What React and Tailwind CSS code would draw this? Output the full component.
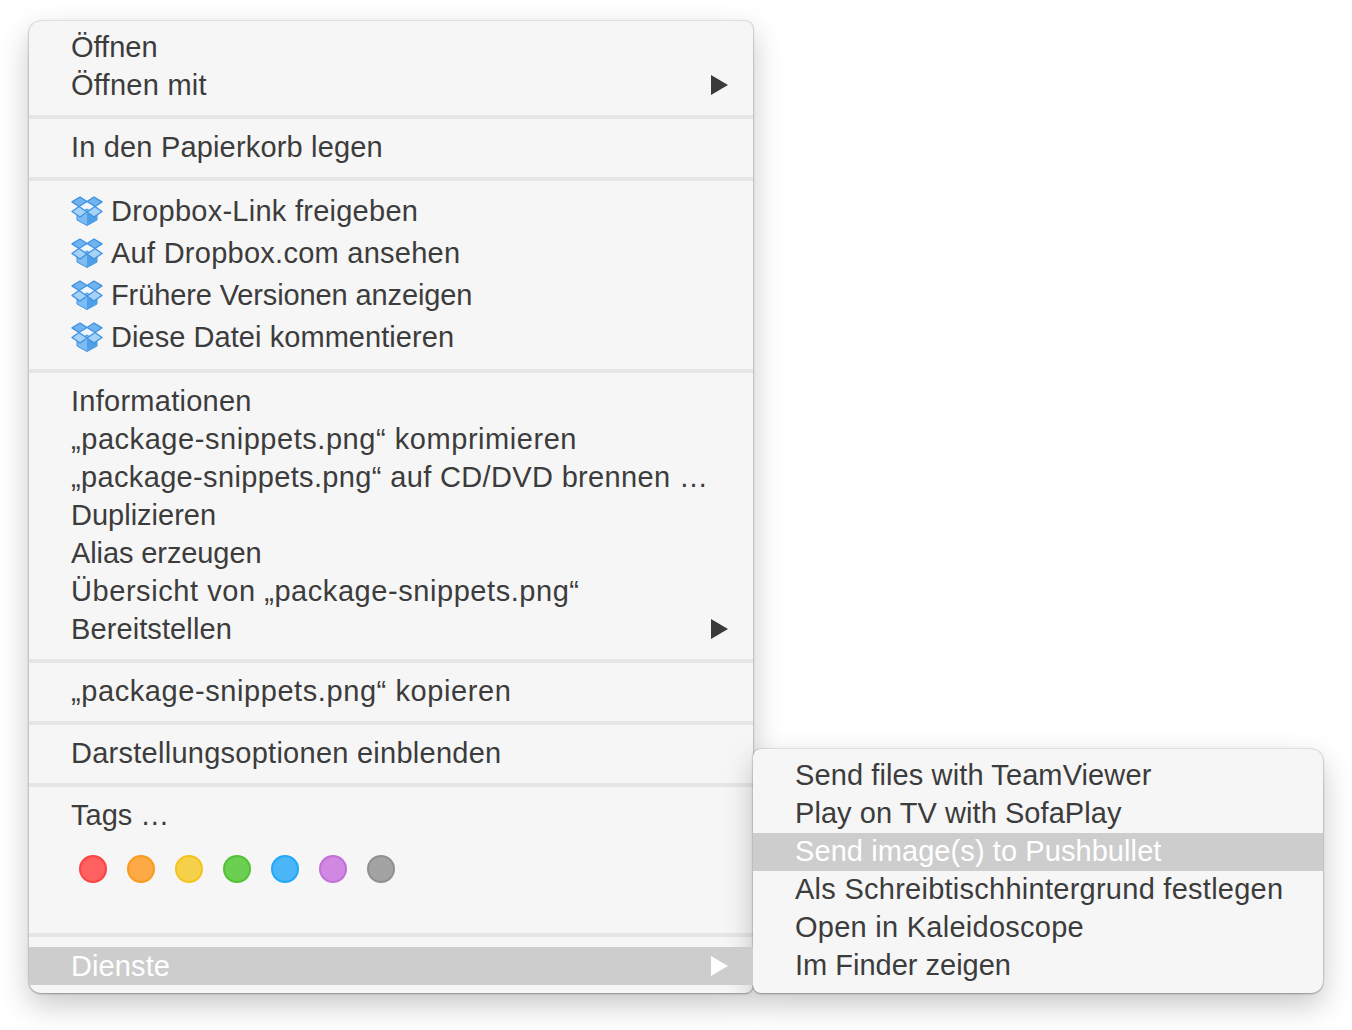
import React from 'react'

const fontStyle = "font-['Liberation_Sans',Arial,sans-serif]"

const DropboxIcon = () => (
  <svg width="32" height="30" viewBox="0 0 32 30" className="shrink-0">
    <path d="M16 5.5L8 10.5L16 16L24 10.5Z" fill="#eef7fe" />
    <path d="M6 19L16 13L26 19V24L16 29.5L6 24Z" fill="#7dbcf2" stroke="#3f93e2" strokeWidth="1" strokeLinejoin="round" />
    <path d="M16 17L26 19V24L16 29.5Z" fill="#4f9fe8" />
    <path d="M9 1L16 5.5L8 10.5L1 5.8Z" fill="#6fb3ef" stroke="#3f93e2" strokeWidth="1.4" strokeLinejoin="round" />
    <path d="M23 1L31 5.8L24 10.5L16 5.5Z" fill="#6fb3ef" stroke="#3f93e2" strokeWidth="1.4" strokeLinejoin="round" />
    <path d="M1 15.5L8 10.5L16 16L9 21Z" fill="#a6d2f7" stroke="#3f93e2" strokeWidth="1.4" strokeLinejoin="round" />
    <path d="M31 15.5L24 10.5L16 16L23 21Z" fill="#a6d2f7" stroke="#3f93e2" strokeWidth="1.4" strokeLinejoin="round" />
  </svg>
)

const Arrow = ({ white }) => (
  <svg width="17" height="20" viewBox="0 0 17 20" className="absolute right-[25px] top-[9px]">
    <path d="M0 0L17 10L0 20Z" fill={white ? '#ffffff' : '#3a3a3a'} />
  </svg>
)

// track: per-line letter spacing, Liberation runs a little off Helvetica Neue
const Row = ({ children, arrow, active, track = '' }) => (
  <div className={`relative flex h-[38px] items-center whitespace-nowrap pl-[42px] ${track} ${active ? 'bg-[#cdcdcd] text-white' : ''}`}>
    {children}
    {arrow && <Arrow white={active} />}
  </div>
)

const DropboxRow = ({ children, track = '' }) => (
  <div className={`flex h-[42px] items-center gap-2 whitespace-nowrap pl-[42px] ${track}`}>
    <DropboxIcon />
    <span>{children}</span>
  </div>
)

const Separator = () => <div className="mt-[11px] mb-[9px] h-1 bg-[#e6e6e6]" />

const tagColors = [
  'bg-[#ff6060] border-[#fb4343]',
  'bg-[#fda945] border-[#f99b1c]',
  'bg-[#f5d04a] border-[#f4c31a]',
  'bg-[#6bd052] border-[#53c135]',
  'bg-[#4ab6f7] border-[#1fa9f6]',
  'bg-[#d088e2] border-[#c36fd9]',
  'bg-[#a3a3a4] border-[#909091]',
]

export default function App() {
  return (
    <div className={`${fontStyle} flex h-[1030px] w-[1352px] items-end overflow-hidden bg-white pb-[37px] pl-[29px] text-[29px] leading-none tracking-[0.26px] text-[#3c3c3c]`}>
      <div className="h-[972px] w-[724px] rounded-l-[12px] rounded-r-[8px] bg-[#f6f6f6] pt-[7px] shadow-[0_0_2px_rgba(0,0,0,0.3),0_1px_2px_rgba(0,0,0,0.25),0_12px_30px_rgba(0,0,0,0.22)]">
        <Row track="tracking-[0px]">Öffnen</Row>
        <Row arrow>Öffnen mit</Row>
        <Separator />
        <Row track="tracking-[0.17px]">In den Papierkorb legen</Row>
        <Separator />
        <DropboxRow>Dropbox-Link freigeben</DropboxRow>
        <DropboxRow>Auf Dropbox.com ansehen</DropboxRow>
        <DropboxRow track="tracking-[-0.12px]">Frühere Versionen anzeigen</DropboxRow>
        <DropboxRow track="tracking-[0.06px]">Diese Datei kommentieren</DropboxRow>
        <Separator />
        <Row>Informationen</Row>
        <Row track="tracking-[0.55px]">„package-snippets.png“ komprimieren</Row>
        <Row track="tracking-[0.35px]">„package-snippets.png“ auf CD/DVD brennen …</Row>
        <Row track="tracking-[0px]">Duplizieren</Row>
        <Row track="tracking-[-0.1px]">Alias erzeugen</Row>
        <Row track="tracking-[0.56px]">Übersicht von „package-snippets.png“</Row>
        <Row arrow track="tracking-[0.1px]">Bereitstellen</Row>
        <Separator />
        <Row track="tracking-[0.58px]">„package-snippets.png“ kopieren</Row>
        <Separator />
        <Row>Darstellungsoptionen einblenden</Row>
        <Separator />
        <Row track="tracking-[0px]">Tags …</Row>
        <div className="flex h-[99px] gap-5 pl-[50px] pt-[21px]">
          {tagColors.map((c) => (
            <div key={c} className={`h-7 w-7 rounded-full border-2 ${c}`} />
          ))}
        </div>
        <div className="mb-[10px] h-1 bg-[#e6e6e6]" />
        <Row arrow active track="tracking-[0.1px]">Dienste</Row>
      </div>
      <div className="h-[244px] w-[570px] rounded-r-[12px] rounded-l-[8px] bg-[#f6f6f6] pt-[8px] shadow-[0_0_2px_rgba(0,0,0,0.3),0_1px_2px_rgba(0,0,0,0.25),0_12px_30px_rgba(0,0,0,0.22)] [&>div]:pb-[2px]">
        <Row track="tracking-[0.11px]">Send files with TeamViewer</Row>
        <Row track="tracking-[0.06px]">Play on TV with SofaPlay</Row>
        <Row active track="tracking-[0.08px]">Send image(s) to Pushbullet</Row>
        <Row>Als Schreibtischhintergrund festlegen</Row>
        <Row>Open in Kaleidoscope</Row>
        <Row track="tracking-[0px]">Im Finder zeigen</Row>
      </div>
    </div>
  )
}
